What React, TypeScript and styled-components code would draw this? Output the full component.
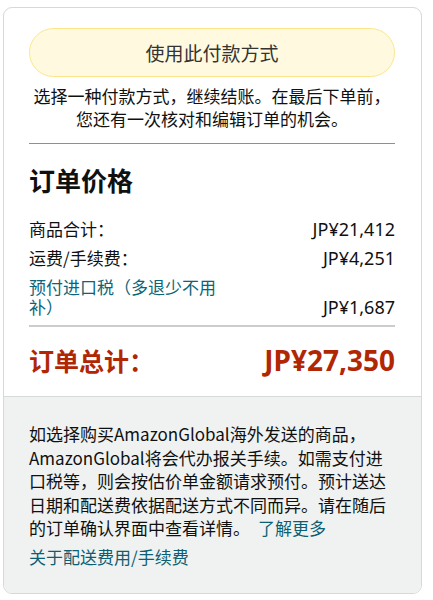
import styled, { createGlobalStyle } from 'styled-components';

const GlobalStyle = createGlobalStyle`
	body {
		margin: 0;
		background: #ffffff;
		font-family: 'Noto Sans CJK SC', 'Noto Sans', sans-serif;
		color: #0f1111;
	}
`;

const Card = styled.div`
	box-sizing: border-box;
	width: 419px;
	margin: 7px 0 0 3px;
	border: 1px solid #d5d9d9;
	border-radius: 9px;
	overflow: hidden;
	background: #ffffff;
`;

const Main = styled.div`
	padding: 20px 26px 20px 25px;
`;

const PayButton = styled.button`
	box-sizing: border-box;
	display: block;
	width: 100%;
	height: 49px;
	border: 1px solid #fce58a;
	border-radius: 25px;
	background: #fffadf;
	color: #333333;
	font-family: 'Noto Sans CJK SC', sans-serif;
	font-size: 19px;
	cursor: default;
`;

const Hint = styled.p`
	margin: 7px 0 0;
	font-size: 17px;
	line-height: 23px;
	text-align: center;
`;

const Rule = styled.hr<{ $thick?: boolean }>`
	border: none;
	height: ${(p) => (p.$thick ? '2px' : '1px')};
	background: ${(p) => (p.$thick ? '#cccccc' : '#8f8f8f')};
	margin: ${(p) => (p.$thick ? '8px 0 0' : '13px 0 0')};
`;

const Heading = styled.h2`
	margin: 20px 0 0;
	font-size: 26px;
	line-height: 32px;
	font-weight: 700;
`;

const Rows = styled.div`
	margin-top: 23px;
	display: flex;
	flex-direction: column;
	gap: 9px;
`;

const Row = styled.div`
	display: flex;
	justify-content: space-between;
	align-items: flex-end;
	font-size: 17px;
	line-height: 20px;
`;

const Label = styled.span<{ $link?: boolean }>`
	max-width: 196px;
	color: ${(p) => (p.$link ? '#0a6577' : '#0f1111')};
`;

const Amount = styled.span`
	font-family: 'Noto Sans', 'Noto Sans CJK SC', sans-serif;
	font-size: 18px;
	white-space: nowrap;
`;

const TotalRow = styled.div`
	margin-top: 17px;
	display: flex;
	justify-content: space-between;
	align-items: center;
	color: #b12704;
	font-weight: 700;
	line-height: 32px;
`;

const TotalLabel = styled.span`
	font-size: 25px;
`;

const TotalAmount = styled.span`
	font-family: 'Noto Sans', 'Noto Sans CJK SC', sans-serif;
	font-size: 28px;
`;

const Notice = styled.div`
	background: #f0f2f2;
	border-top: 1px solid #d5d9d9;
	padding: 25px 26px 25px 25px;
	font-size: 17px;
	line-height: 23.5px;
`;

const NoticeText = styled.p`
	margin: 0;
`;

const Link = styled.a<{ $block?: boolean }>`
	color: #0a5f72;
	text-decoration: none;
	display: ${(p) => (p.$block ? 'block' : 'inline')};
	margin: ${(p) => (p.$block ? '5px 0 0' : '0 0 0 8px')};
`;

export default function App() {
	return (
		<>
			<GlobalStyle />
			<Card>
				<Main>
					<PayButton>使用此付款方式</PayButton>
					<Hint>
						选择一种付款方式，继续结账。在最后下单前，
						<br />
						您还有一次核对和编辑订单的机会。
					</Hint>
					<Rule />
					<Heading>订单价格</Heading>
					<Rows>
						<Row>
							<Label>商品合计：</Label>
							<Amount>JP¥21,412</Amount>
						</Row>
						<Row>
							<Label>运费/手续费：</Label>
							<Amount>JP¥4,251</Amount>
						</Row>
						<Row>
							<Label $link>预付进口税（多退少不用补）</Label>
							<Amount>JP¥1,687</Amount>
						</Row>
					</Rows>
					<Rule $thick />
					<TotalRow>
						<TotalLabel>订单总计：</TotalLabel>
						<TotalAmount>JP¥27,350</TotalAmount>
					</TotalRow>
				</Main>
				<Notice>
					<NoticeText>
						如选择购买AmazonGlobal海外发送的商品，AmazonGlobal将会代办报关手续。如需支付进口税等，则会按估价单金额请求预付。预计送达日期和配送费依据配送方式不同而异。请在随后的订单确认界面中查看详情。
						<Link href="#">了解更多</Link>
					</NoticeText>
					<Link href="#" $block>
						关于配送费用/手续费
					</Link>
				</Notice>
			</Card>
		</>
	);
}
